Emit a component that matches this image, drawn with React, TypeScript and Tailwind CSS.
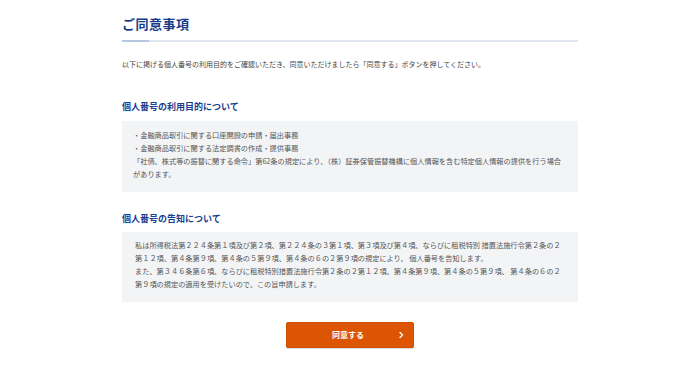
const jp = "font-['Noto_Sans_CJK_JP','Noto_Sans',sans-serif]";

function SectionBox({ title, children }: { title: string; children: React.ReactNode }) {
  return (
    <section>
      <h2 className="text-[9px] font-bold leading-[12px] text-[#173d8f]">{title}</h2>
      {children}
    </section>
  );
}

export default function App() {
  return (
    <div className={`min-h-[365px] w-full bg-white ${jp}`}>
      <div className="mx-auto w-[456px] pt-[16px]">
        <h1 className="text-[13px] font-bold leading-[16px] tracking-[0.5px] text-[#163a8a]">ご同意事項</h1>
        <div className="mt-[8px] flex h-[2px] w-full bg-[#e1e6ee]">
          <div className="h-full w-[27px] bg-[#b7c7df]" />
        </div>

        <p className="mt-[16px] text-[7px] leading-[12px] text-[#444]">
          以下に掲げる個人番号の利用目的をご確認いただき、同意いただけましたら「同意する」ボタンを押してください。
        </p>

        <div className="mt-[31px]">
          <SectionBox title="個人番号の利用目的について">
            <div className="mt-[8px] whitespace-nowrap bg-[#f3f4f6] px-[11px] pb-[11px] pt-[8px] text-[7.2px] leading-[13px] text-[#555]">
              <p>・金融商品取引に関する口座開設の申請・届出事務</p>
              <p>・金融商品取引に関する法定調書の作成・提供事務</p>
              <p>「社債、株式等の振替に関する命令」第62条の規定により、（株）証券保管振替機構に個人情報を含む特定個人情報の提供を行う場合</p>
              <p>があります。</p>
            </div>
          </SectionBox>
        </div>

        <div className="mt-[21px]">
          <SectionBox title="個人番号の告知について">
            <div className="mt-[7px] whitespace-nowrap bg-[#f3f4f6] px-[13px] pb-[11px] pt-[7px] text-[7.2px] leading-[13px] text-[#555]">
              <p>私は所得税法第２２４条第１項及び第２項、第２２４条の３第１項、第３項及び第４項、ならびに租税特別 措置法施行令第２条の２</p>
              <p>第１２項、第４条第９項、第４条の５第９項、第４条の６の２第９項の規定により、 個人番号を告知します。</p>
              <p>また、第３４６条第６項、ならびに租税特別措置法施行令第２条の２第１２項、第４条第９項、第４条の５第９項、 第４条の６の２</p>
              <p>第９項の規定の適用を受けたいので、この旨申請します。</p>
            </div>
          </SectionBox>
        </div>

        <div className="mt-[20px] flex justify-center">
          <button
            type="button"
            className="relative flex h-[26px] w-[128px] items-center justify-center rounded-[2px] border border-[#cf5000] bg-[#dc5502] text-[8px] font-bold text-white shadow-[0_1px_1px_rgba(0,0,0,0.15)]"
          >
            <span className="-ml-[4px]">同意する</span>
            <svg
              className="absolute right-[9px] top-1/2 -translate-y-1/2"
              width="5"
              height="7"
              viewBox="0 0 5 7"
              fill="none"
            >
              <path d="M1 1l2.5 2.5L1 6" stroke="white" strokeWidth="1.4" strokeLinecap="round" strokeLinejoin="round" />
            </svg>
          </button>
        </div>
      </div>
    </div>
  );
}
